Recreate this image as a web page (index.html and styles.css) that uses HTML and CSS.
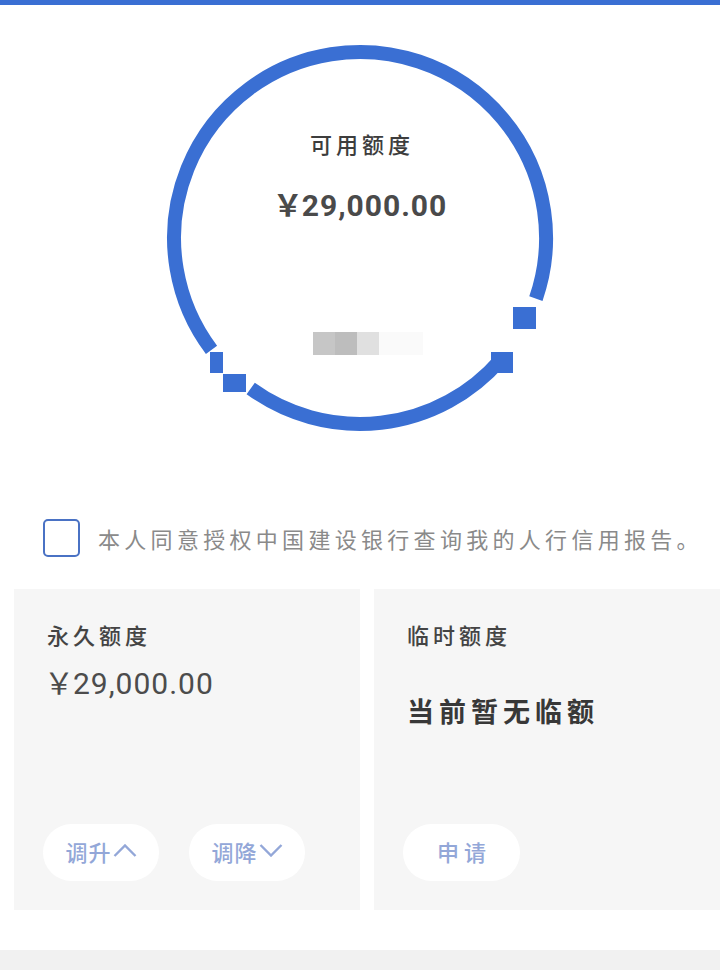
FILE: index.html
```html
<!DOCTYPE html>
<html lang="zh-CN">
<head>
    <meta charset="UTF-8">
    <meta name="viewport" content="width=device-width, initial-scale=1.0">
    <title>额度管理</title>
    <link rel="stylesheet" href="styles.css">
</head>
<body>
    <div class="topbar"></div>

    <div class="gauge">
        <svg class="gauge-ring" width="400" height="400" viewBox="0 0 400 400">
            <path d="M340.4 322 A186 186 0 0 1 90.7 350.5" />
            <path d="M51.5 311.9 A186 186 0 1 1 375.9 260.6" />
            <rect x="331" y="314" width="22" height="21" />
            <rect x="353" y="269" width="23" height="22" />
            <rect x="50" y="314" width="13" height="21" />
            <rect x="63" y="336" width="23" height="18" />
        </svg>
        <div class="gauge-title">可用额度</div>
        <div class="gauge-amount"><span class="yen">￥</span>29,000.00</div>
        <div class="mosaic">
            <span class="m1"></span>
            <span class="m2"></span>
            <span class="m3"></span>
            <span class="m4"></span>
        </div>
    </div>

    <div class="agree">
        <span class="checkbox"></span>
        <span class="agree-text">本人同意授权中国建设银行查询我的人行信用报告。</span>
    </div>

    <div class="cards">
        <div class="card">
            <div class="card-label">永久额度</div>
            <div class="card-amount"><span class="yen">￥</span>29,000.00</div>
            <div class="card-actions">
                <button class="pill">调升<svg width="24" height="13" viewBox="0 0 24 13"><path d="M1.5 12 L12 1.5 L22.5 12" /></svg></button>
                <button class="pill">调降<svg width="24" height="13" viewBox="0 0 24 13"><path d="M1.5 1 L12 11.5 L22.5 1" /></svg></button>
            </div>
        </div>
        <div class="card">
            <div class="card-label">临时额度</div>
            <div class="card-empty">当前暂无临额</div>
            <div class="card-actions">
                <button class="pill pill-apply">申请</button>
            </div>
        </div>
    </div>

    <div class="bottom-bar"></div>
</body>
</html>
```

FILE: styles.css
```css
:root {
    --blue: #3a6fd3;
    --card-bg: #f6f6f6;
    --pill-text: #93a7d8;
}

* {
    box-sizing: border-box;
}

body {
    margin: 0;
    width: 720px;
    height: 977px;
    overflow: hidden;
    background: #fff;
    font-family: Roboto, "Noto Sans CJK SC", sans-serif;
    color: #444;
}

.topbar {
    height: 5px;
    background: var(--blue);
}

/* cercle du haut */
.gauge {
    position: relative;
    width: 400px;
    height: 400px;
    margin: 33px auto 0;
    padding-top: 90px;
    text-align: center;
}

.gauge-ring {
    position: absolute;
    left: 0;
    top: 0;
}

.gauge-ring path {
    fill: none;
    stroke: var(--blue);
    stroke-width: 14;
}

.gauge-ring rect {
    fill: var(--blue);
}

.gauge-title {
    position: relative;
    font-family: "Noto Sans CJK SC", sans-serif;
    font-size: 22px;
    line-height: 30px;
    font-weight: 500;
    letter-spacing: 4px;
    padding-left: 4px;
    color: #3d3d3d;
}

.gauge-amount {
    position: relative;
    margin-top: 25px;
    font-size: 30px;
    line-height: 40px;
    font-weight: 700;
    letter-spacing: 1px;
    color: #4a4a4a;
}

.yen {
    font-family: "Noto Sans CJK SC", sans-serif;
    margin-right: -2px;
}

.mosaic {
    position: relative;
    display: flex;
    justify-content: center;
    margin-top: 106px;
    padding-left: 16px;
}

.mosaic span {
    width: 22px;
    height: 23px;
}

.mosaic .m1 { background: #c6c6c6; }
.mosaic .m2 { background: #bdbdbd; }
.mosaic .m3 { background: #e0e0e0; }
.mosaic .m4 { width: 44px; background: #fafafa; }

/* autorisation */
.agree {
    display: flex;
    align-items: center;
    gap: 18px;
    margin-top: 81px;
    padding-left: 43px;
}

.checkbox {
    width: 37px;
    height: 38px;
    border: 2px solid #4a72c4;
    border-radius: 5px;
    flex-shrink: 0;
}

.agree-text {
    font-family: "Noto Sans CJK SC", sans-serif;
    font-size: 22px;
    letter-spacing: 4.3px;
    color: #8a8a8a;
    white-space: nowrap;
}

/* cartes */
.cards {
    display: flex;
    gap: 14px;
    margin-top: 32px;
    padding-left: 14px;
}

.card {
    display: flex;
    flex-direction: column;
    width: 346px;
    height: 321px;
    flex-shrink: 0;
    padding: 30px 0 29px 33px;
    background: var(--card-bg);
}

.card-label {
    font-family: "Noto Sans CJK SC", sans-serif;
    font-size: 22px;
    line-height: 30px;
    font-weight: 500;
    letter-spacing: 4px;
    color: #444;
}

.card-amount {
    margin-top: 12px;
    margin-left: -3px;
    font-size: 30px;
    line-height: 40px;
    letter-spacing: 1px;
    color: #4c4c4c;
}

.card-empty {
    margin-top: 44px;
    font-family: "Noto Sans CJK SC", sans-serif;
    font-size: 27px;
    line-height: 36px;
    font-weight: 700;
    letter-spacing: 5px;
    color: #383838;
}

.card-actions {
    display: flex;
    gap: 30px;
    margin-top: auto;
    margin-left: -4px;
}

.pill {
    display: flex;
    align-items: center;
    justify-content: center;
    gap: 1px;
    width: 116px;
    height: 57px;
    padding: 0 0 4px;
    border: none;
    border-radius: 29px;
    background: #fff;
    font-family: "Noto Sans CJK SC", sans-serif;
    font-size: 22px;
    font-weight: 500;
    letter-spacing: 1px;
    color: var(--pill-text);
}

.pill svg path {
    fill: none;
    stroke: var(--pill-text);
    stroke-width: 2.4;
}

.pill-apply {
    width: 117px;
    padding-left: 5px;
    letter-spacing: 5px;
}

.bottom-bar {
    height: 20px;
    margin-top: 40px;
    background: #f1f1f1;
}
```
